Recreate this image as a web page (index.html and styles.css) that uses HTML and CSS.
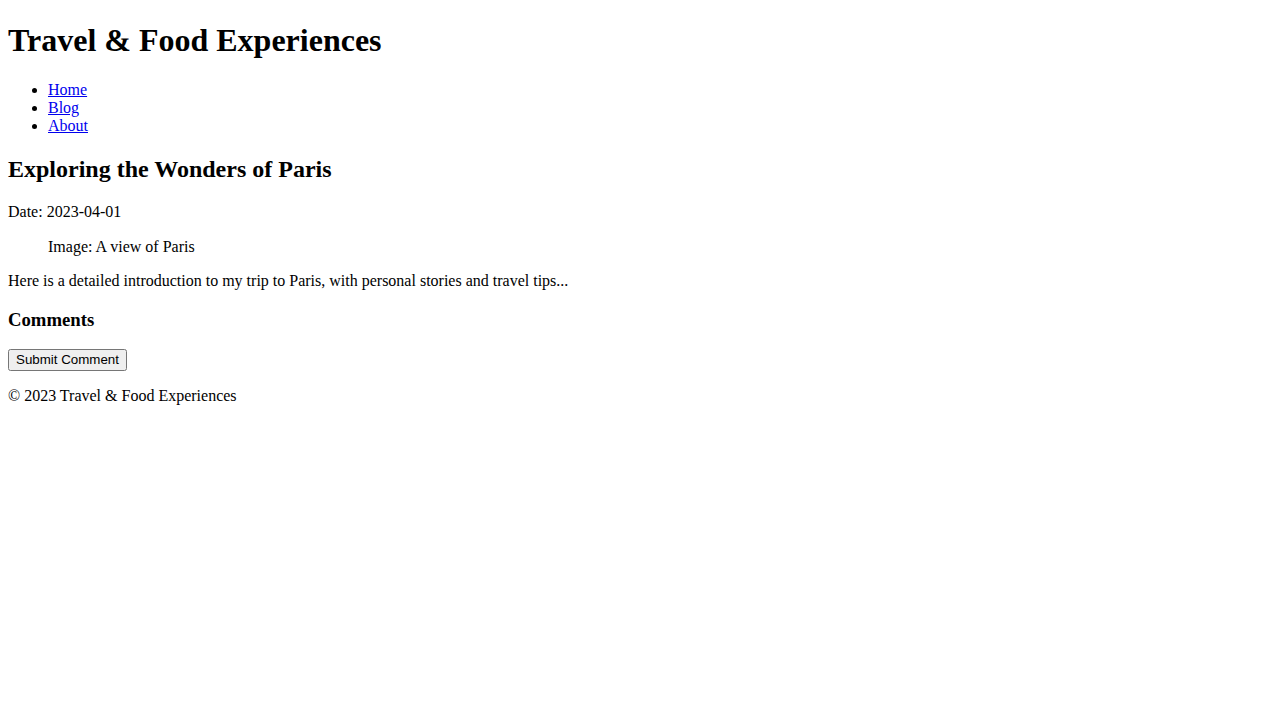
FILE: index.html
```html
<!DOCTYPE html>
<html lang="en">
<head>
<meta charset="utf-8">
<title>Travel &amp; Food Experiences</title>
<link rel="stylesheet" href="styles.css">
</head>
<body class="page">
<header class="site-header">
  <h1 class="site-title">Travel &amp; Food Experiences</h1>
  <nav class="site-nav">
    <ul class="nav-list">
      <li><a href="#">Home</a></li>
      <li><a href="#">Blog</a></li>
      <li><a href="#">About</a></li>
    </ul>
  </nav>
</header>
<main class="content">
  <article class="post">
    <h2 class="post-title">Exploring the Wonders of Paris</h2>
    <p class="post-date">Date: 2023-04-01</p>
    <figure class="post-figure">Image: A view of Paris</figure>
    <p class="post-body">Here is a detailed introduction to my trip to Paris, with personal stories and travel tips...</p>
  </article>
  <section class="comments">
    <h3 class="comments-title">Comments</h3>
    <form class="comment-form">
      <button type="button" class="submit-btn">Submit Comment</button>
    </form>
  </section>
</main>
<footer class="site-footer">
  <p class="copyright">&copy; 2023 Travel &amp; Food Experiences</p>
</footer>
</body>
</html>
```
FILE: styles.css
```css
html {
  margin: 0;
  padding: 0;
  background: #fff;
}
.page {
  margin: 0;
  padding: 1px 8px 8px;
  font-family: "Liberation Serif", "Times New Roman", serif;
  font-size: 16px;
  line-height: 1.15;
  color: #000;
}
.site-title { font-size: 32px; margin: 21.44px 0; font-weight: bold; }
.nav-list { margin: 16px 0; padding-left: 40px; }
.nav-list a { color: #0000ee; text-decoration: underline; }
.post-title { font-size: 24px; margin: 19.92px 0; font-weight: bold; }
.post-date, .post-body { margin: 16px 0; }
.post-figure { margin: 16px 40px; }
.comments-title { font-size: 18.72px; margin: 18.72px 0; font-weight: bold; }
.comment-form { margin: 0; }
.submit-btn {
  font-family: "Liberation Sans", Arial, sans-serif;
  font-size: 13.333px;
  line-height: 1.15;
}
.copyright { margin: 16px 0; }
```
